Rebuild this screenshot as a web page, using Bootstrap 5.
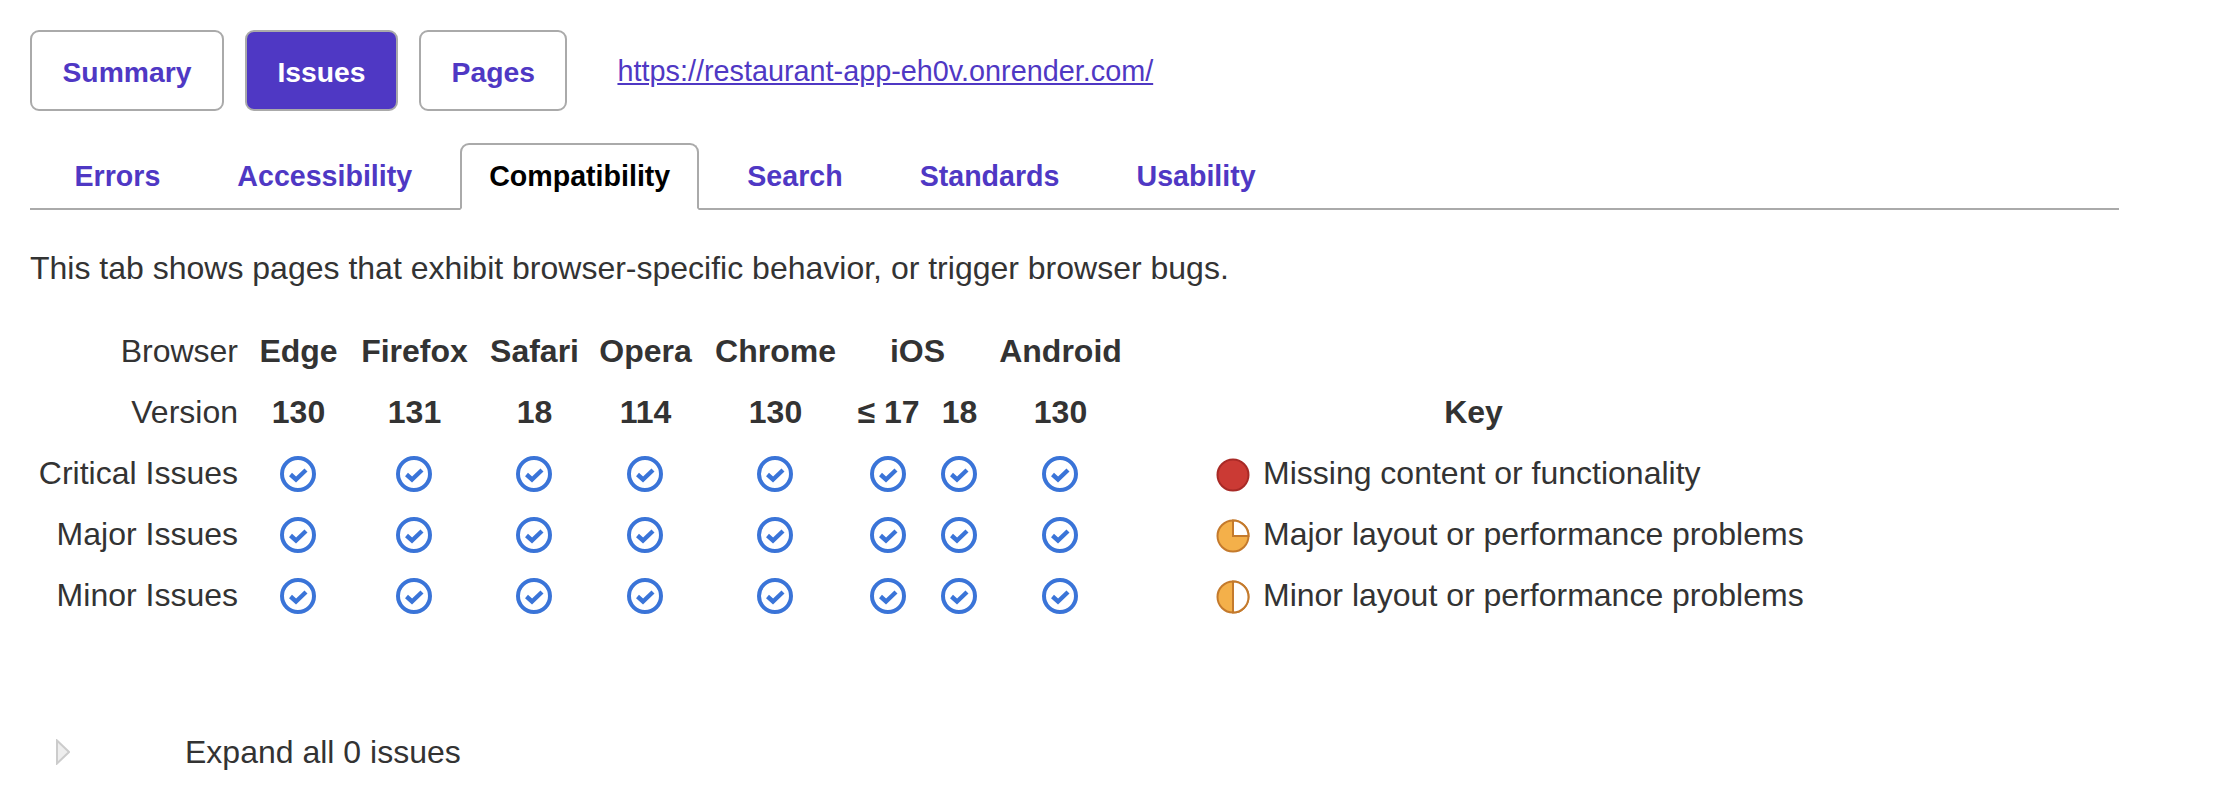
<!DOCTYPE html>
<html lang="en">
<head>
  <meta charset="UTF-8">
  <title>Issues</title>
  <link href="https://cdn.jsdelivr.net/npm/bootstrap@5.3.0/dist/css/bootstrap.min.css" rel="stylesheet">
  <style>
    body {
        font-family: "Liberation Sans", Arial, sans-serif;
        font-size: 32px;
        color: #333;
        background: #fff;
    }

    .report-page {
        padding: 30px 119px 0 30px;
    }

    .report-btn {
        height: 81px;
        padding: 4px 30.5px 0;
        font-size: 28.3px;
        font-weight: 700;
        color: #4f38c4;
        background: #fff;
        border: 2px solid #aaa;
        border-radius: 9px;
    }

    .report-btn.active, .report-btn.active:hover {
        color: #fff;
        background: #4f38c4;
        border-color: #aaa;
    }

    .report-btns {
        gap: 21px;
    }

    .report-url {
        margin-left: 29px;
        margin-top: 2px;
        font-size: 28.8px;
        color: #4f38c4;
    }

    .report-tabs {
        margin-top: 32px;
        padding-left: 6px;
        border-bottom: 2px solid #aaa;
    }

    .report-tabs .nav-link {
        height: 67px;
        margin: 0 9.5px -2px;
        padding: 13px 27px 0;
        font-size: 28.6px;
        font-weight: 700;
        line-height: 36px;
        color: #4f38c4;
        background: none;
        border: 2px solid transparent;
        border-radius: 9px 9px 0 0;
    }

    .report-tabs .nav-link.active {
        color: #000;
        background: #fff;
        border-color: #aaa #aaa #fff;
    }

    .report-intro {
        margin: 40px 0 0;
        line-height: 36px;
    }

    .compat-table {
        --bs-table-color: #333;
        table-layout: fixed;
        width: 1772px;
        margin: 34px 0 0;
    }

    .compat-table th, .compat-table td {
        height: 61px;
        padding: 0;
        font-size: 32px;
        text-align: center;
        vertical-align: middle;
        white-space: nowrap;
    }

    .compat-table th {
        padding-left: 1px;
    }

    .compat-table .row-label {
        padding-right: 12px;
        font-weight: 400;
        text-align: right;
    }

    .compat-table .key-head {
        padding-right: 72px;
    }

    .compat-table .key-item {
        text-align: left;
    }

    .check-icon {
        display: block;
        width: 36px;
        height: 36px;
        margin: 2px auto 0;
    }

    .key-icon {
        width: 34px;
        height: 34px;
        margin-right: 13px;
        vertical-align: -8px;
    }

    .expand-row {
        margin-top: 103px;
        padding-left: 26px;
    }

    .expand-row svg {
        width: 14px;
        height: 26px;
        margin-right: 115px;
    }
  </style>
</head>
<body>
<svg width="0" height="0" class="position-absolute">
  <symbol id="check" viewBox="0 0 36 36">
    <circle cx="18" cy="18" r="16" fill="none" stroke="#3a74d8" stroke-width="4"/>
    <path d="M10.5 18.5l5.5 5 10-9.5" fill="none" stroke="#3a74d8" stroke-width="4.4"/>
  </symbol>
</svg>

<div class="report-page">
  <div class="d-flex align-items-center report-btns">
    <button class="btn report-btn">Summary</button>
    <button class="btn report-btn active">Issues</button>
    <button class="btn report-btn">Pages</button>
    <a class="report-url" href="#">https://restaurant-app-eh0v.onrender.com/</a>
  </div>

  <ul class="nav nav-tabs report-tabs">
    <li class="nav-item"><a class="nav-link" href="#">Errors</a></li>
    <li class="nav-item"><a class="nav-link" href="#">Accessibility</a></li>
    <li class="nav-item"><a class="nav-link active" href="#">Compatibility</a></li>
    <li class="nav-item"><a class="nav-link" href="#">Search</a></li>
    <li class="nav-item"><a class="nav-link" href="#">Standards</a></li>
    <li class="nav-item"><a class="nav-link" href="#">Usability</a></li>
  </ul>

  <p class="report-intro">This tab shows pages that exhibit browser-specific behavior, or trigger browser bugs.</p>

  <table class="table table-borderless compat-table">
    <colgroup>
      <col style="width: 220px"><col style="width: 96px"><col style="width: 136px"><col style="width: 104px"><col style="width: 118px"><col style="width: 142px"><col style="width: 84px"><col style="width: 58px"><col style="width: 144px"><col style="width: 84px"><col style="width: 586px">
    </colgroup>
    <tbody id="compatBody">
      <tr>
        <td class="row-label">Browser</td>
        <th>Edge</th><th>Firefox</th><th>Safari</th><th>Opera</th><th>Chrome</th><th colspan="2">iOS</th><th>Android</th><td></td><td></td>
      </tr>
      <tr>
        <td class="row-label">Version</td>
        <th>130</th><th>131</th><th>18</th><th>114</th><th>130</th><th>≤ 17</th><th>18</th><th>130</th><td></td><th class="key-head">Key</th>
      </tr>
    </tbody>
  </table>

  <div class="expand-row d-flex align-items-center">
    <svg viewBox="0 0 14 26"><path d="M1 1.5L13 13 1 24.5z" fill="#eee" stroke="#ccc" stroke-width="2"/></svg>
    <span>Expand all 0 issues</span>
  </div>
</div>

<script>
  const keyIcons = {
      critical: '<circle cx="17" cy="17" r="15.5" fill="#cb3a34" stroke="#a82a26" stroke-width="2"/>',
      major: '<circle cx="17" cy="17" r="15.5" fill="#f4b04a" stroke="#c47a2c" stroke-width="2"/><path d="M17 17V1.5A15.5 15.5 0 0 1 32.5 17z" fill="#fff" stroke="#c47a2c" stroke-width="2"/>',
      minor: '<circle cx="17" cy="17" r="15.5" fill="#f4b04a" stroke="#c47a2c" stroke-width="2"/><path d="M17 1.5A15.5 15.5 0 0 1 17 32.5z" fill="#fff" stroke="#c47a2c" stroke-width="2"/>'
  };

  const issueRows = [
      { label: 'Critical Issues', icon: 'critical', text: 'Missing content or functionality' },
      { label: 'Major Issues', icon: 'major', text: 'Major layout or performance problems' },
      { label: 'Minor Issues', icon: 'minor', text: 'Minor layout or performance problems' }
  ];

  const checkCell = '<td><svg class="check-icon"><use href="#check"/></svg></td>';

  document.getElementById('compatBody').insertAdjacentHTML('beforeend', issueRows.map(row => `
      <tr>
        <td class="row-label">${row.label}</td>
        ${checkCell.repeat(8)}
        <td></td>
        <td class="key-item"><svg class="key-icon" viewBox="0 0 34 34">${keyIcons[row.icon]}</svg>${row.text}</td>
      </tr>
  `).join(''));
</script>
</body>
</html>
